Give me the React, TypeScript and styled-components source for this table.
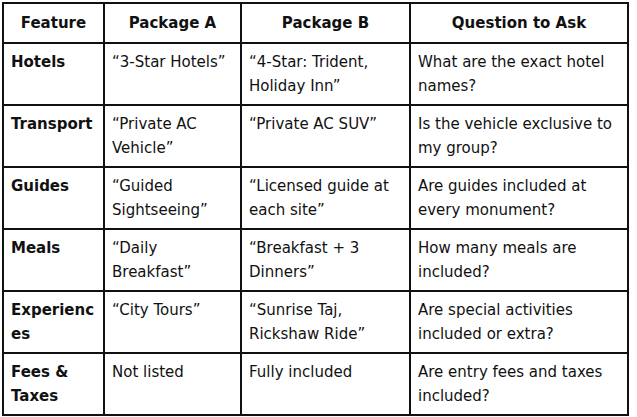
import styled, { createGlobalStyle } from 'styled-components'

const GlobalStyle = createGlobalStyle`
    html, body {
        margin: 0;
        padding: 0;
        background: #ffffff;
    }
    body {
        padding: 2px;
        font-family: 'DejaVu Sans', 'Noto Sans', sans-serif;
        color: #111111;
    }
`

interface Row {
    feature: string
    a: string
    b: string
    question: string
}

const rows: Row[] = [
    { feature: 'Hotels', a: '“3-Star Hotels”', b: '“4-Star: Trident, Holiday Inn”', question: 'What are the exact hotel names?' },
    { feature: 'Transport', a: '“Private AC Vehicle”', b: '“Private AC SUV”', question: 'Is the vehicle exclusive to my group?' },
    { feature: 'Guides', a: '“Guided Sightseeing”', b: '“Licensed guide at each site”', question: 'Are guides included at every monument?' },
    { feature: 'Meals', a: '“Daily Breakfast”', b: '“Breakfast + 3 Dinners”', question: 'How many meals are included?' },
    { feature: 'Experiences', a: '“City Tours”', b: '“Sunrise Taj, Rickshaw Ride”', question: 'Are special activities included or extra?' },
    { feature: 'Fees & Taxes', a: 'Not listed', b: 'Fully included', question: 'Are entry fees and taxes included?' },
]

const widths = [101, 137, 169, 218]

const App = () => {
    return (
        <>
            <GlobalStyle />
            <Table>
                <colgroup>
                    {widths.map((w, i) => (
                        <col key={i} style={{ width: w }} />
                    ))}
                </colgroup>
                <thead>
                    <tr>
                        <Head>Feature</Head>
                        <Head>Package A</Head>
                        <Head>Package B</Head>
                        <Head>Question to Ask</Head>
                    </tr>
                </thead>
                <tbody>
                    {rows.map((r) => (
                        <tr key={r.feature}>
                            <Cell $bold>{r.feature}</Cell>
                            <Cell>{r.a}</Cell>
                            <Cell>{r.b}</Cell>
                            <Cell>{r.question}</Cell>
                        </tr>
                    ))}
                </tbody>
            </Table>
        </>
    )
}

const Table = styled.table`
    width: 625px;
    table-layout: fixed;
    border-collapse: collapse;
    border: 2px solid #111;
`

const Head = styled.th`
    border: 2px solid #111;
    padding: 7px 8px;
    font-size: 15px;
    font-weight: 700;
    line-height: 24px;
    text-align: center;
    vertical-align: top;
`

const Cell = styled.td<{ $bold?: boolean }>`
    border: 2px solid #111;
    padding: 6px 7px;
    font-size: 15px;
    font-weight: ${({ $bold }) => ($bold ? 700 : 400)};
    line-height: 24px;
    text-align: left;
    vertical-align: top;
    overflow-wrap: anywhere;
`

export default App
